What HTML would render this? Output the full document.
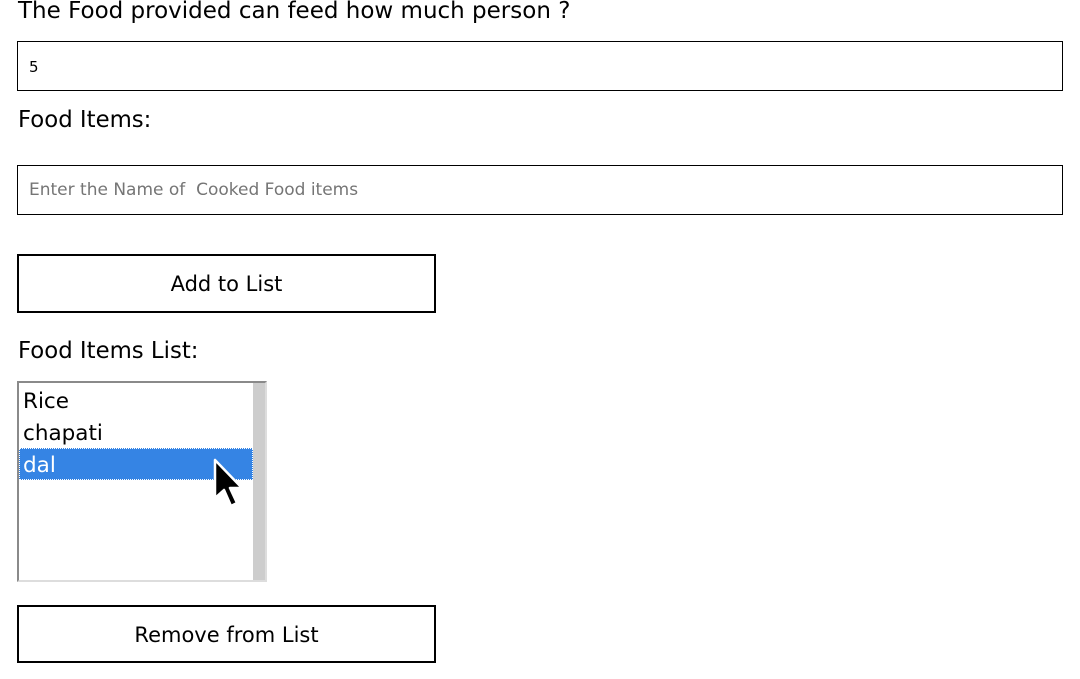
<!DOCTYPE html>
<html><head><style>
body{margin:0;width:1080px;height:679px;background:#fff;font-family:"DejaVu Sans","Liberation Sans",sans-serif;color:#000;position:relative;overflow:hidden}
.a{position:absolute;white-space:nowrap}
.inp{position:absolute;left:17px;width:1044px;height:48px;border:1px solid #000;box-sizing:content-box}
.btn{position:absolute;left:17px;width:415px;border:2px solid #000;text-align:center;font-size:21px}
</style></head><body>
<div class="a" style="left:18px;top:-2px;font-size:23px">The Food provided can feed how much person ?</div>
<div class="inp" style="top:41px"><span class="a" style="left:11px;top:16px;font-size:15px">5</span></div>
<div class="a" style="left:18px;top:107px;font-size:22.8px">Food Items:</div>
<div class="inp" style="top:165px"><span class="a" style="left:11px;top:14px;font-size:17px;color:#757575">Enter the Name of&nbsp; Cooked Food items</span></div>
<div class="btn" style="top:254px;height:55px;line-height:57px">Add to List</div>
<div class="a" style="left:18px;top:338px;font-size:22.8px">Food Items List:</div>
<div class="a" style="left:17px;top:381px;width:246px;height:197px;border-top:2px solid #8a8a8a;border-left:2px solid #8a8a8a;border-right:2px solid #ddd;border-bottom:2px solid #ddd;box-sizing:content-box">
 <div class="a" style="right:0;top:0;width:12px;height:197px;background:#cdcdcd"></div>
 <div class="a" style="left:4px;top:6px;font-size:21.5px">Rice</div>
 <div class="a" style="left:4px;top:38px;font-size:21.5px">chapati</div>
 <div class="a" style="left:0;top:65px;width:234px;height:32px;background:#3584e4;border:1px dotted #fff;box-sizing:border-box"></div>
 <div class="a" style="left:4px;top:70px;font-size:21.5px;color:#fff">dal</div>
</div>
<svg class="a" style="left:212px;top:458px" width="36" height="56" viewBox="0 0 36 56"><path d="M3 2 L3 40 L12 32 L19 48 L25 45 L18 30 L30 30 Z" fill="#000" stroke="#fff" stroke-width="2.5" stroke-linejoin="round"/></svg>
<div class="btn" style="top:605px;height:54px;line-height:56px">Remove from List</div>
</body></html>
